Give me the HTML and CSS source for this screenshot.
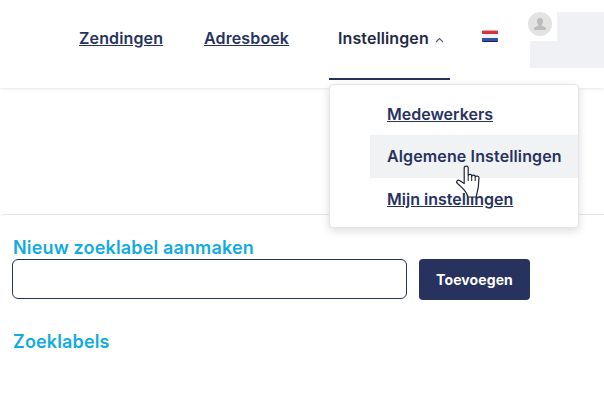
FILE: index.html
```html
<!DOCTYPE html>
<html lang="nl">
<head>
  <meta charset="UTF-8" />
  <title>Zoeklabels</title>
  <link rel="stylesheet" href="styles.css">
</head>
<body>
  <header class="topbar">
    <nav class="nav">
      <a class="nav-link" href="#">Zendingen</a>
      <a class="nav-link" href="#">Adresboek</a>
      <div class="nav-item-open">
        <span class="nav-current">Instellingen
          <svg class="chevron" width="9" height="6" viewBox="0 0 9 6"><path d="M1 5l3.500-3.500L8 5" fill="none" stroke="#555f78" stroke-width="1.100"/></svg>
        </span>
        <ul class="dropdown">
          <li><a href="#">Medewerkers</a></li>
          <li class="hover"><span>Algemene Instellingen</span></li>
          <li><a href="#">Mijn instellingen</a></li>
        </ul>
        <svg class="cursor" width="26" height="33" viewBox="0 0 26 33">
          <path d="M8.200 3c0-2.600 4-2.600 4 0v7.500c0-1.500 3.500-1.500 3.500 0v.8c0-1.500 3.500-1.500 3.500 0v.8c0-1.500 3.800-1.300 3.800.5 0 6-.3 11-2.800 19.400H12c-1-4-3-6.400-6-9.400L1 18c-1-1.500.5-3.500 2.500-2.500l4.700 3z" fill="#fff" stroke="#1c2230" stroke-width="1.200" stroke-linejoin="round"/>
          <path d="M12.200 10.500V16M15.700 11v5M19.200 12v4" stroke="#1c2230" stroke-width="1" fill="none"/>
        </svg>
      </div>
      <svg class="flag" width="16" height="12" viewBox="0 0 16 12">
        <rect width="16" height="1" fill="#f0a0a0"/>
        <rect y="1" width="16" height="3" fill="#d8303c"/>
        <rect y="4" width="16" height="4" fill="#f4f4f8"/>
        <rect y="8" width="16" height="3" fill="#3350a8"/>
        <rect y="11" width="16" height="1" fill="#14235e"/>
      </svg>
      <div class="account">
        <div class="account-top">
          <span class="avatar">
            <svg width="14" height="14" viewBox="0 0 14 14"><path d="M7 1c2 0 3 1.400 3 3.300 0 1.400-.6 2.700-1.400 3.400v1.100c1.400.6 4 1.100 4.400 2.500V13H1v-1.700c.4-1.400 3-1.900 4.400-2.500V7.700C4.600 7 4 5.700 4 4.300 4 2.400 5 1 7 1z" fill="#bcbcbc"/></svg>
          </span>
          <span class="placeholder-name"></span>
        </div>
        <div class="placeholder-company"></div>
      </div>
    </nav>
  </header>

  <main class="panel">
    <form class="label-form">
      <label class="section-title" for="newLabel">Nieuw zoeklabel aanmaken</label>
      <div class="form-row">
        <input id="newLabel" class="text-input" type="text">
        <button class="btn-primary" type="button">Toevoegen</button>
      </div>
    </form>
    <h2 class="section-title labels-title">Zoeklabels</h2>
  </main>
</body>
</html>
```

FILE: styles.css
```css
html, body {
  margin: 0;
  height: 100%;
  overflow: hidden;
}

body {
  background: #fff;
  color: #27325f;
  font-family: "Inter", "Liberation Sans", sans-serif;
}

.topbar {
  height: 88px;
  box-sizing: border-box;
  background: #fff;
  box-shadow: 0 1px 3px rgba(0, 0, 0, 0.1);
}

.nav {
  display: flex;
  align-items: flex-start;
  padding: 12px 0 0 79px;
}

.nav-link {
  flex: none;
  width: 84px;
  margin-top: 16px;
  margin-right: 41px;
  color: #27325f;
  font-size: 16px;
  font-weight: 600;
  line-height: 20px;
  letter-spacing: 0.13px;
  white-space: nowrap;
}

.nav-link + .nav-link {
  width: 85px;
  margin-right: 40px;
}

.nav-item-open {
  position: relative;
  flex: none;
  width: 121px;
  height: 68px;
  box-sizing: border-box;
  border-bottom: 2px solid #27325f;
  padding: 16px 0 0 9px;
}

.nav-current {
  font-size: 16px;
  font-weight: 600;
  line-height: 20px;
  letter-spacing: 0.1px;
  color: #1f2a44;
  white-space: nowrap;
}

.chevron {
  margin-left: 2px;
  vertical-align: 1px;
}

.dropdown {
  position: absolute;
  top: 72px;
  left: 0;
  width: 250px;
  height: 144px;
  box-sizing: border-box;
  margin: 0;
  padding: 8px 0 0 40px;
  list-style: none;
  background: #fff;
  border: 1px solid #e4e6ee;
  border-radius: 4px;
  box-shadow: 0 3px 8px rgba(0, 0, 0, 0.14);
  z-index: 2;
}

.dropdown li {
  height: 42px;
  padding-left: 17px;
  font-size: 16px;
  font-weight: 600;
  line-height: 42px;
}

.dropdown a {
  color: #27325f;
}

.dropdown .hover {
  height: 43px;
  background: #f1f2f4;
  letter-spacing: 0.13px;
}

.cursor {
  position: absolute;
  top: 153px;
  left: 127px;
  z-index: 3;
}

.flag {
  flex: none;
  margin: 18px 0 0 32px;
  border-radius: 1px;
}

.account {
  margin-left: 30px;
  flex: 1;
}

.account-top {
  display: flex;
  height: 29px;
}

.avatar {
  display: flex;
  align-items: center;
  justify-content: center;
  width: 24px;
  height: 24px;
  border-radius: 50%;
  background: #e3e3e3;
}

.placeholder-name {
  flex: 1;
  margin-left: 5px;
  background: #f0f1f4;
}

.placeholder-company {
  height: 27px;
  margin-left: 2px;
  background: #f0f1f4;
}

.panel {
  margin-top: 126px;
  height: 197px;
  box-sizing: border-box;
  padding: 23px 0 0 12px;
  border-top: 1px solid #e6e6e6;
  border-radius: 4px 0 0 0;
}

.section-title {
  display: block;
  margin: 0 0 0 1px;
  color: #12abe0;
  font-size: 18px;
  font-weight: 600;
  line-height: 20px;
  letter-spacing: 0.15px;
}

.form-row {
  display: flex;
  gap: 12px;
  margin-top: 1px;
}

.text-input {
  width: 395px;
  height: 40px;
  box-sizing: border-box;
  border: 1px solid #27325f;
  border-radius: 6px;
  background: #fff;
}

.btn-primary {
  width: 111px;
  height: 41px;
  border: none;
  border-radius: 4px;
  background: #27325f;
  color: #fff;
  font-family: inherit;
  font-size: 14px;
  font-weight: 700;
  letter-spacing: 0.1px;
}

.labels-title {
  margin-top: 32px;
}
```
